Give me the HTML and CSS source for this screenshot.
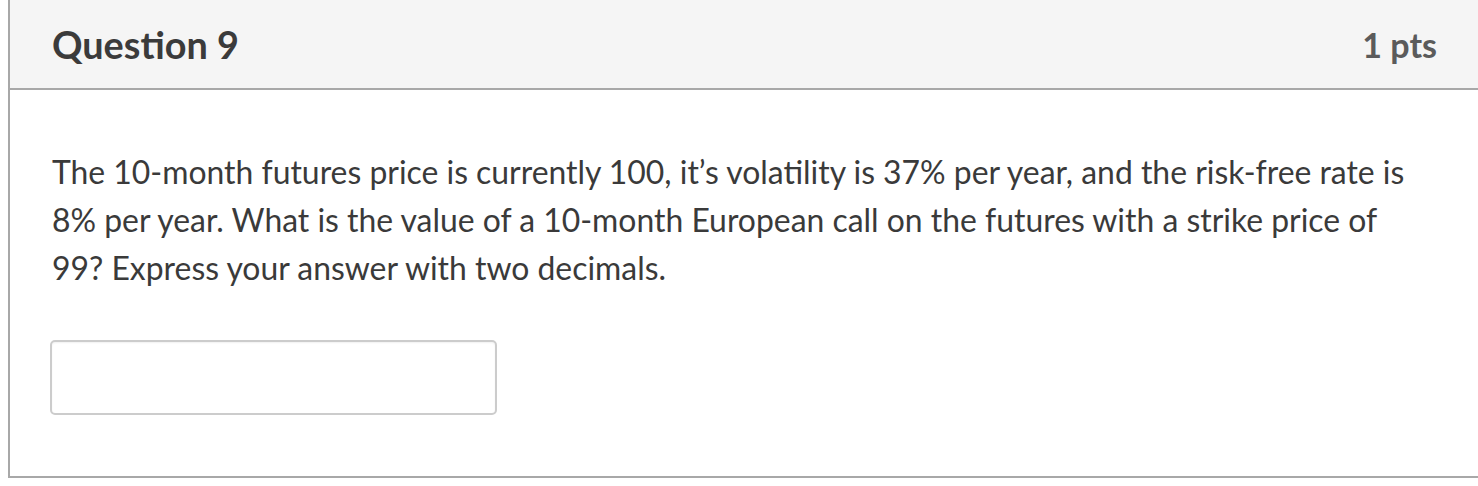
FILE: index.html
```html
<!DOCTYPE html>
<html lang="en">
<head>
<meta charset="utf-8">
<title>Question 9</title>
<link rel="stylesheet" href="styles.css">
</head>
<body>
<div class="question">
  <div class="question-header">
    <h2 class="question-title">Question 9</h2>
    <span class="question-points">1 pts</span>
  </div>
  <div class="question-body">
    <p class="question-text">The 10-month futures price is currently 100, it’s volatility is 37% per year, and the risk-free rate is 8% per year. What is the value of a 10-month European call on the futures with a strike price of 99? Express your answer with two decimals.</p>
    <input class="answer-input" type="text" aria-label="Answer">
  </div>
</div>
</body>
</html>
```

FILE: styles.css
```css
html, body {
  margin: 0;
  padding: 0;
  background: #ffffff;
  overflow: hidden;
}
body {
  font-family: Lato, "Liberation Sans", sans-serif;
  color: #3a3a3a;
}
.question {
  margin-left: 8px;
  border-left: 2px solid #a8a8a8;
  border-bottom: 2px solid #a8a8a8;
}
.question-header {
  display: flex;
  justify-content: space-between;
  align-items: center;
  height: 88px;
  padding: 0 41px 0 42px;
  background: #f5f5f5;
  border-bottom: 2px solid #a8a8a8;
}
.question-title {
  margin: 0;
  font-size: 37.8px;
  font-weight: 700;
  color: #3b3b3b;
}
.question-points {
  font-size: 34px;
  font-weight: 700;
  color: #5b5b5b;
}
.question-body {
  padding: 58px 42px 61px 42px;
}
.question-text {
  margin: 0;
  font-size: 31.9px;
  line-height: 48px;
  color: #3a3a3a;
}
.answer-input {
  display: block;
  box-sizing: border-box;
  margin-top: 48px;
  width: 447px;
  height: 75px;
  border: 2px solid #cccccc;
  border-radius: 5px;
  background: #fff;
  box-shadow: inset 0 1px 2px rgba(0,0,0,0.06);
  padding: 0 12px;
  font-family: inherit;
  font-size: 27px;
  margin-left: -2px;
}
```
